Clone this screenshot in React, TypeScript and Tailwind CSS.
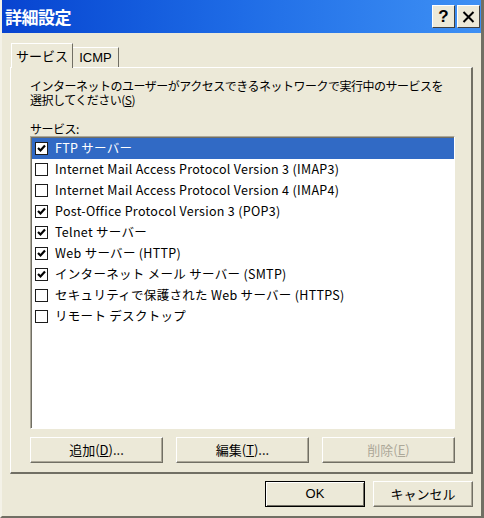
import React from "react";

type Service = {
  label: string;
  checked: boolean;
};

const services: Service[] = [
  { label: "FTP サーバー", checked: true },
  { label: "Internet Mail Access Protocol Version 3 (IMAP3)", checked: false },
  { label: "Internet Mail Access Protocol Version 4 (IMAP4)", checked: false },
  { label: "Post-Office Protocol Version 3 (POP3)", checked: true },
  { label: "Telnet サーバー", checked: true },
  { label: "Web サーバー (HTTP)", checked: true },
  { label: "インターネット メール サーバー (SMTP)", checked: true },
  { label: "セキュリティで保護された Web サーバー (HTTPS)", checked: false },
  { label: "リモート デスクトップ", checked: false },
];

const font = "font-['Noto_Sans_CJK_JP','Noto_Sans',sans-serif]";

function CheckBox({ checked }: { checked: boolean }) {
  return (
    <span className="w-[13px] h-[13px] border border-[#1c1c1c] bg-white flex items-center justify-center shrink-0">
      {checked && (
        <svg width="11" height="11" viewBox="0 0 11 11">
          <path d="M2 5 L4.5 7.5 L9 2.5" fill="none" stroke="#000" strokeWidth="2.2" />
        </svg>
      )}
    </span>
  );
}

function Button({
  children,
  className = "",
  disabled = false,
  isDefault = false,
}: {
  children: React.ReactNode;
  className?: string;
  disabled?: boolean;
  isDefault?: boolean;
}) {
  return (
    <button
      className={`h-[26px] bg-[#ece9d8] text-[13px] flex items-center justify-center border ${
        isDefault
          ? "border-black shadow-[inset_1px_1px_0_#fff,inset_-1px_-1px_0_#716f64]"
          : "border-t-white border-l-white border-r-[#716f64] border-b-[#716f64] shadow-[inset_-1px_-1px_0_#aca899]"
      } ${disabled ? "text-[#aca899]" : "text-black"} ${className}`}
    >
      {children}
    </button>
  );
}

export default function App() {
  return (
    <div className={`w-[484px] h-[518px] bg-[#ece9d8] flex flex-col border-r-[3px] border-b-[2px] border-l-[2px] border-r-[#716f64] border-b-[#716f64] border-l-[#f4f2e8] ${font}`}>
      {/* title bar */}
      <div className="h-[33px] bg-gradient-to-r from-[#0843d0] via-[#1f6ce6] to-[#3e90f4] flex items-center pl-[3px] pr-[1px] shrink-0">
        <span className="text-white text-[17px] font-bold tracking-[-0.5px] flex-1">詳細設定</span>
        <div className="flex gap-[2px]">
          <span className="w-[23px] h-[23px] bg-[#ece9d8] border border-t-white border-l-white border-r-[#404040] border-b-[#404040] flex items-center justify-center text-[17px] font-bold leading-none font-['Liberation_Sans',sans-serif]">
            ?
          </span>
          <span className="w-[23px] h-[23px] bg-[#ece9d8] border border-t-white border-l-white border-r-[#404040] border-b-[#404040] flex items-center justify-center">
            <svg width="13" height="12" viewBox="0 0 13 12">
              <path d="M1.5 1 L11.5 11 M11.5 1 L1.5 11" stroke="#000" strokeWidth="2" />
            </svg>
          </span>
        </div>
      </div>

      <div className="pl-[8px] pt-[10px] pr-[8px]">
        {/* tabs */}
        <div className="flex items-end h-[24px] pl-[1px]">
          <div className="h-[25px] w-[62px] bg-[#ece9d8] border-t border-l border-white border-r border-r-[#716f64] flex items-center justify-center text-[13px] relative z-10 -mb-[1px]">
            サービス
          </div>
          <div className="h-[20px] w-[46px] border-t border-white border-r border-r-[#716f64] flex items-center justify-center text-[13px] font-['Liberation_Sans',sans-serif]">
            ICMP
          </div>
        </div>

        {/* panel */}
        <div className="w-[463px] h-[407px] border-t border-l border-white border-r-[2px] border-b-[2px] border-r-[#716f64] border-b-[#716f64] pl-[19px] pr-[16px] pt-[11px] flex flex-col">
          <div className="text-[12px] leading-[14px] tracking-[-0.5px]">
            <div>インターネットのユーザーがアクセスできるネットワークで実行中のサービスを</div>
            <div>
              選択してください(<span className="underline">S</span>)
            </div>
          </div>
          <div className="text-[12px] leading-[14px] mt-[15px] tracking-[-0.5px]">サービス:</div>

          <div className="w-[425px] h-[293px] bg-white border border-t-[#aca899] border-l-[#aca899] border-r-white border-b-white shadow-[inset_1px_1px_0_#716f64]">
            <div className="pt-[1px] pl-[1px]">
              {services.map((s, i) => (
                <div
                  key={s.label}
                  className={`h-[21px] flex items-center gap-[7px] pl-[3px] text-[12.5px] ${
                    i === 0 ? "bg-[#316ac5] text-white" : "text-black"
                  }`}
                >
                  <CheckBox checked={s.checked} />
                  <span className="whitespace-nowrap tracking-[0.3px]">{s.label}</span>
                </div>
              ))}
            </div>
          </div>

          <div className="flex gap-[13px] mt-[8px]">
            <Button className="w-[133px]">
              追加(<span className="underline">D</span>)...
            </Button>
            <Button className="w-[133px]">
              編集(<span className="underline">T</span>)...
            </Button>
            <Button className="w-[133px]" disabled>
              削除(<span className="underline">E</span>)
            </Button>
          </div>
        </div>

        {/* footer */}
        <div className="flex justify-end gap-[8px] pt-[7px]">
          <Button className="w-[100px] font-['Liberation_Sans',sans-serif]" isDefault>
            OK
          </Button>
          <Button className="w-[100px]">キャンセル</Button>
        </div>
      </div>
    </div>
  );
}
